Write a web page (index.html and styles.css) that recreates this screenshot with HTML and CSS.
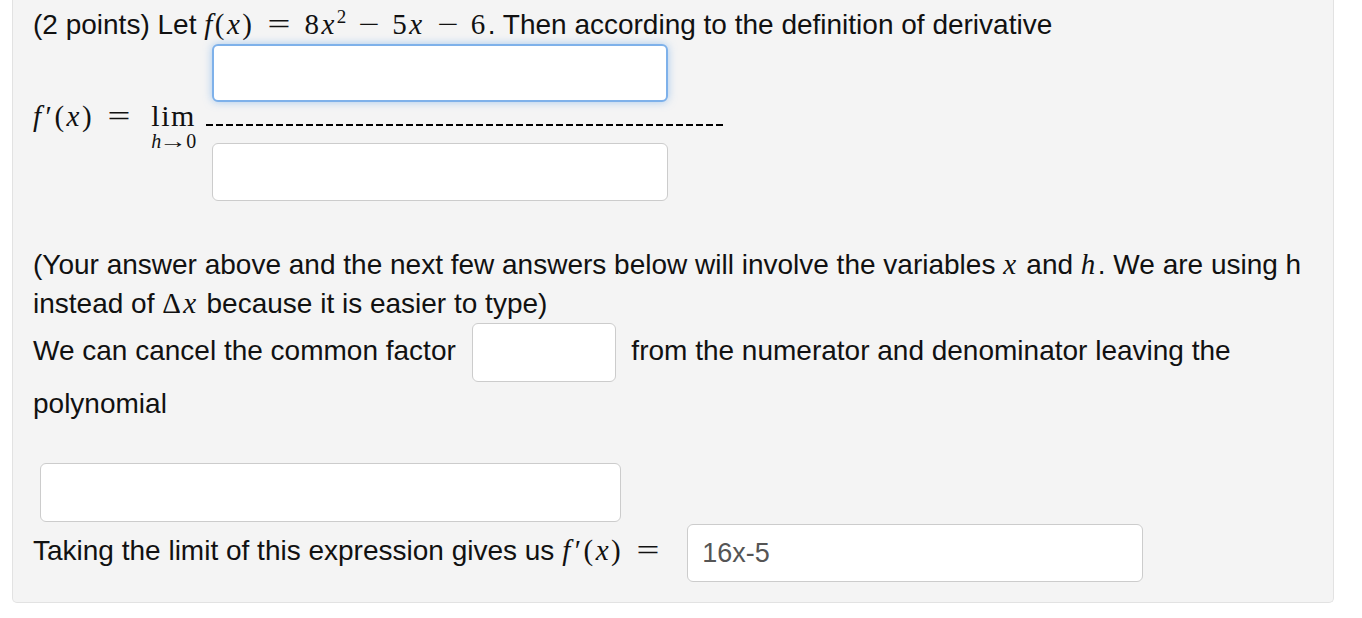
FILE: index.html
```html
<!DOCTYPE html>
<html>
<head>
<meta charset="utf-8">
<link rel="stylesheet" href="styles.css">
</head>
<body>
<div class="well">
  <p class="line">(2 points) Let <span class="m"><i>f</i>(<i>x</i>)<span class="rel">=</span>8<i>x</i><sup>2</sup><span class="bin">−</span>5<i>x</i><span class="bin">−</span>6</span>. Then according to the definition of derivative</p>
  <div class="deriv">
    <div class="lhs">
      <span class="m"><i>f</i><span class="prime">′</span>(<i>x</i>)<span class="rel">=</span></span>
      <span class="lim"><span class="limword">lim</span><span class="limsub"><i>h</i><span class="arrow">→</span>0</span></span>
    </div>
    <div class="frac">
      <input class="inp big focus" type="text">
      <div class="bar"></div>
      <input class="inp big" type="text">
    </div>
  </div>
  <p class="para intro">(Your answer above and the next few answers below will involve the variables <span class="m"><i>x</i></span> and <span class="m"><i>h</i></span>. We are using h instead of <span class="m">Δ<i>x</i></span> because it is easier to type)</p>
  <p class="para cancel">We can cancel the common factor <input class="inp small" type="text"> from the numerator and denominator leaving the polynomial</p>
  <div class="polyrow"><input class="inp poly" type="text"></div>
  <p class="para last">Taking the limit of this expression gives us <span class="m"><i>f</i><span class="prime">′</span>(<i>x</i>)<span class="rel">=</span></span><input class="inp big answer" type="text" value="16x-5"></p>
</div>
</body>
</html>
```
FILE: styles.css
```css
html, body {
  margin: 0;
  padding: 0;
  background: #fff;
}
body {
  padding: 0 28px 0 12px;
  font-family: "Liberation Sans", Arial, sans-serif;
  font-size: 28px;
  color: #111;
}
.well {
  background: #f4f4f4;
  border: 1px solid #e2e2e2;
  border-top: none;
  border-radius: 0 0 5px 5px;
  padding: 9px 20px 20px 20px;
}
.m {
  font-family: "Liberation Serif", "Times New Roman", serif;
  font-size: 29px;
  letter-spacing: 2.5px;
  line-height: 1;
}
.m i { font-style: italic; }
.m sup { font-size: 19px; vertical-align: 11px; line-height: 0; letter-spacing: 0; }
.prime { display: inline-block; margin-left: 2px; }
.rel {
  display: inline-block;
  width: 50px;
  text-align: center;
  letter-spacing: 0;
  transform: scaleX(1.4);
}
.bin {
  display: inline-block;
  width: 46px;
  text-align: center;
  letter-spacing: 0;
  transform: scaleX(1.3);
}
.line { margin: 0; line-height: 32px; }
.deriv {
  display: flex;
  align-items: center;
  margin-top: 3px;
}
.lhs {
  display: flex;
  align-items: flex-start;
  padding-top: 6px;
}
.lhs .m { line-height: 30px; }
.lim {
  display: inline-flex;
  flex-direction: column;
  align-items: center;
  font-family: "Liberation Serif", "Times New Roman", serif;
  margin-left: 7px;
}
.limword { font-size: 30px; line-height: 30px; letter-spacing: 1.5px; }
.limsub { font-size: 20px; line-height: 20px; white-space: nowrap; }
.limsub i { font-style: italic; }
.arrow { display: inline-block; transform: scaleX(1.4); margin: 0 3px 0 2px; }
.frac {
  display: flex;
  flex-direction: column;
  margin-left: 10px;
  width: 520px;
}
.inp {
  box-sizing: border-box;
  background: #fff;
  border: 1px solid #cccccc;
  border-radius: 6px;
  font-family: "Liberation Sans", Arial, sans-serif;
  font-size: 27px;
  color: #555;
  padding: 0 14px;
  outline: none;
}
.big { width: 456px; height: 58px; }
.frac .inp { margin-left: 6px; }
.focus {
  border: 2px solid #7eb1ea;
  box-shadow: 0 0 8px rgba(102, 165, 233, 0.55);
}
.bar {
  height: 2px;
  margin: 22px 0 17px;
  background: repeating-linear-gradient(to right, #000 0 7px, transparent 7px 10px);
}
.para {
  margin: 0;
  line-height: 39px;
}
.intro { margin-top: 44px; }
.cancel { line-height: 44px; }
.small {
  width: 144px;
  height: 59px;
  margin: 0 8px;
  vertical-align: middle;
}
.polyrow { margin-top: 37px; padding-left: 7px; }
.poly { width: 581px; height: 59px; display: block; }
.last { margin-top: 2px; white-space: nowrap; }
.answer { vertical-align: middle; margin-left: 14px; }
```
